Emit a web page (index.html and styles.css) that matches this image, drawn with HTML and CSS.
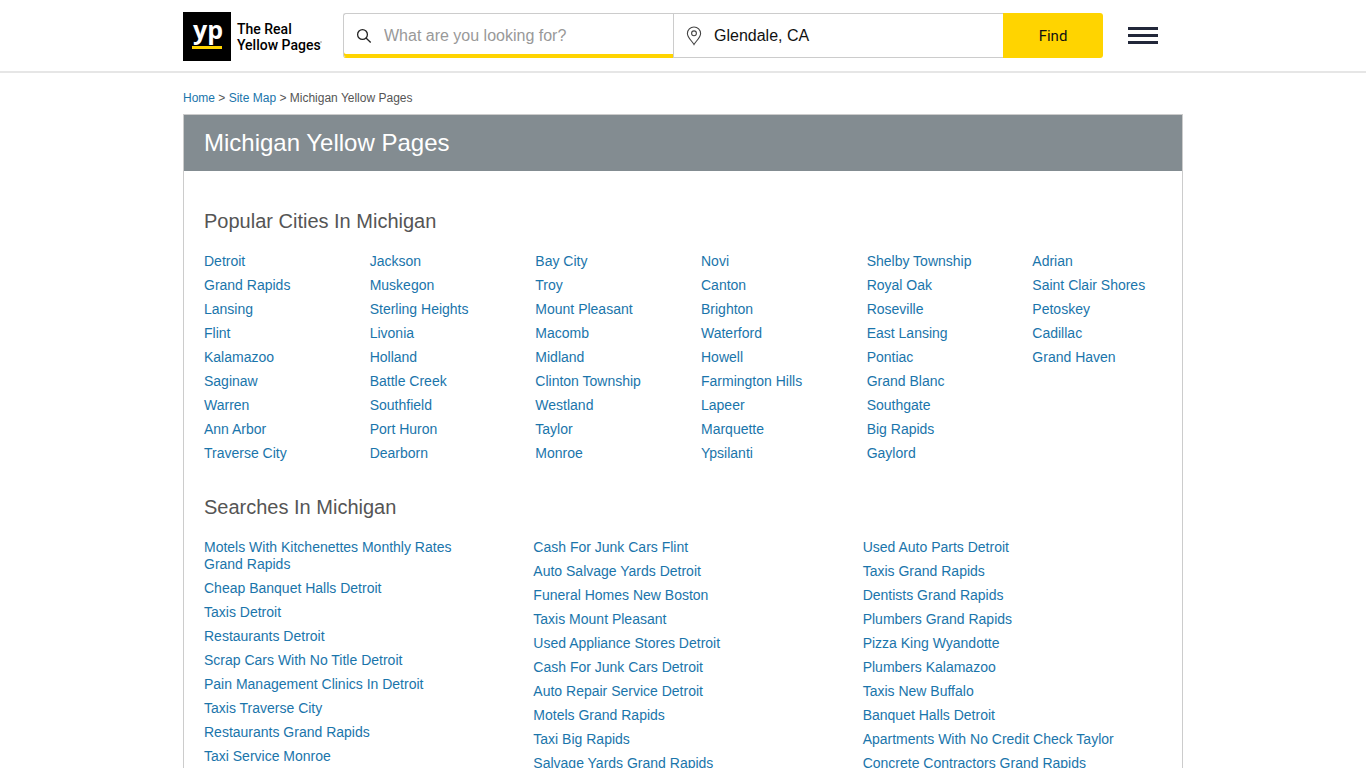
FILE: index.html
```html
<!DOCTYPE html>
<html lang="en">
<head>
    <meta charset="UTF-8">
    <meta name="viewport" content="width=device-width, initial-scale=1.0">
    <title>Michigan Yellow Pages</title>
    <link rel="stylesheet" href="styles.css">
</head>
<body>
    <header class="site-header">
        <div class="container header-row">
            <a class="logo" href="#" aria-label="The Real Yellow Pages">
                <svg width="140" height="49" viewBox="0 0 140 49">
                    <rect width="48" height="49" fill="#000"/>
                    <text class="logo-mark" x="10" y="27">yp</text>
                    <rect x="9" y="34" width="30" height="3" fill="#ffd400"/>
                    <text class="logo-name" x="54" y="22">The Real</text>
                    <text class="logo-name" x="54" y="38">Yellow Pages</text>
                    <circle cx="138" cy="30" r="0.8" fill="#888"/>
                </svg>
            </a>

            <form class="search-form">
                <div class="field field-what">
                    <svg width="16" height="16" viewBox="0 0 16 16" fill="none" stroke="#222" stroke-width="1.3">
                        <circle cx="6.5" cy="6.5" r="4.9"/>
                        <path d="M10 10l4.7 4.5"/>
                    </svg>
                    <input type="text" placeholder="What are you looking for?" aria-label="What are you looking for?">
                </div>
                <div class="field field-where">
                    <svg width="16" height="20" viewBox="0 0 16 20" fill="none" stroke="#444" stroke-width="1.1">
                        <path d="M8 18.5C6.2 15.2 1.4 11.6 1.4 7.4a6.6 6.4 0 0 1 13.2 0C14.6 11.6 9.8 15.2 8 18.5z"/>
                        <circle cx="8" cy="7.3" r="2.4"/>
                    </svg>
                    <input type="text" value="Glendale, CA" aria-label="Where">
                </div>
                <button class="find" type="submit">Find</button>
            </form>

            <button class="menu" type="button" aria-label="Menu">
                <span></span>
                <span></span>
                <span></span>
            </button>
        </div>
    </header>

    <main class="container">
        <nav class="breadcrumbs">
            <a href="#">Home</a> &gt; <a href="#">Site Map</a> &gt; Michigan Yellow Pages
        </nav>

        <div class="card">
            <h1>Michigan Yellow Pages</h1>

            <section>
                <h2>Popular Cities In Michigan</h2>
                <div class="columns cities">
                    <ul>
                        <li><a href="#">Detroit</a></li>
                        <li><a href="#">Grand Rapids</a></li>
                        <li><a href="#">Lansing</a></li>
                        <li><a href="#">Flint</a></li>
                        <li><a href="#">Kalamazoo</a></li>
                        <li><a href="#">Saginaw</a></li>
                        <li><a href="#">Warren</a></li>
                        <li><a href="#">Ann Arbor</a></li>
                        <li><a href="#">Traverse City</a></li>
                    </ul>
                    <ul>
                        <li><a href="#">Jackson</a></li>
                        <li><a href="#">Muskegon</a></li>
                        <li><a href="#">Sterling Heights</a></li>
                        <li><a href="#">Livonia</a></li>
                        <li><a href="#">Holland</a></li>
                        <li><a href="#">Battle Creek</a></li>
                        <li><a href="#">Southfield</a></li>
                        <li><a href="#">Port Huron</a></li>
                        <li><a href="#">Dearborn</a></li>
                    </ul>
                    <ul>
                        <li><a href="#">Bay City</a></li>
                        <li><a href="#">Troy</a></li>
                        <li><a href="#">Mount Pleasant</a></li>
                        <li><a href="#">Macomb</a></li>
                        <li><a href="#">Midland</a></li>
                        <li><a href="#">Clinton Township</a></li>
                        <li><a href="#">Westland</a></li>
                        <li><a href="#">Taylor</a></li>
                        <li><a href="#">Monroe</a></li>
                    </ul>
                    <ul>
                        <li><a href="#">Novi</a></li>
                        <li><a href="#">Canton</a></li>
                        <li><a href="#">Brighton</a></li>
                        <li><a href="#">Waterford</a></li>
                        <li><a href="#">Howell</a></li>
                        <li><a href="#">Farmington Hills</a></li>
                        <li><a href="#">Lapeer</a></li>
                        <li><a href="#">Marquette</a></li>
                        <li><a href="#">Ypsilanti</a></li>
                    </ul>
                    <ul>
                        <li><a href="#">Shelby Township</a></li>
                        <li><a href="#">Royal Oak</a></li>
                        <li><a href="#">Roseville</a></li>
                        <li><a href="#">East Lansing</a></li>
                        <li><a href="#">Pontiac</a></li>
                        <li><a href="#">Grand Blanc</a></li>
                        <li><a href="#">Southgate</a></li>
                        <li><a href="#">Big Rapids</a></li>
                        <li><a href="#">Gaylord</a></li>
                    </ul>
                    <ul>
                        <li><a href="#">Adrian</a></li>
                        <li><a href="#">Saint Clair Shores</a></li>
                        <li><a href="#">Petoskey</a></li>
                        <li><a href="#">Cadillac</a></li>
                        <li><a href="#">Grand Haven</a></li>
                    </ul>
                </div>
            </section>

            <section>
                <h2>Searches In Michigan</h2>
                <div class="columns searches">
                    <ul>
                        <li><a href="#">Motels With Kitchenettes Monthly Rates Grand Rapids</a></li>
                        <li><a href="#">Cheap Banquet Halls Detroit</a></li>
                        <li><a href="#">Taxis Detroit</a></li>
                        <li><a href="#">Restaurants Detroit</a></li>
                        <li><a href="#">Scrap Cars With No Title Detroit</a></li>
                        <li><a href="#">Pain Management Clinics In Detroit</a></li>
                        <li><a href="#">Taxis Traverse City</a></li>
                        <li><a href="#">Restaurants Grand Rapids</a></li>
                        <li><a href="#">Taxi Service Monroe</a></li>
                    </ul>
                    <ul>
                        <li><a href="#">Cash For Junk Cars Flint</a></li>
                        <li><a href="#">Auto Salvage Yards Detroit</a></li>
                        <li><a href="#">Funeral Homes New Boston</a></li>
                        <li><a href="#">Taxis Mount Pleasant</a></li>
                        <li><a href="#">Used Appliance Stores Detroit</a></li>
                        <li><a href="#">Cash For Junk Cars Detroit</a></li>
                        <li><a href="#">Auto Repair Service Detroit</a></li>
                        <li><a href="#">Motels Grand Rapids</a></li>
                        <li><a href="#">Taxi Big Rapids</a></li>
                        <li><a href="#">Salvage Yards Grand Rapids</a></li>
                    </ul>
                    <ul>
                        <li><a href="#">Used Auto Parts Detroit</a></li>
                        <li><a href="#">Taxis Grand Rapids</a></li>
                        <li><a href="#">Dentists Grand Rapids</a></li>
                        <li><a href="#">Plumbers Grand Rapids</a></li>
                        <li><a href="#">Pizza King Wyandotte</a></li>
                        <li><a href="#">Plumbers Kalamazoo</a></li>
                        <li><a href="#">Taxis New Buffalo</a></li>
                        <li><a href="#">Banquet Halls Detroit</a></li>
                        <li><a href="#">Apartments With No Credit Check Taylor</a></li>
                        <li><a href="#">Concrete Contractors Grand Rapids</a></li>
                    </ul>
                </div>
            </section>
        </div>
    </main>
</body>
</html>
```
FILE: styles.css
```css
* {
    box-sizing: border-box;
}

body {
    margin: 0;
    background-color: #fff;
    color: #555;
    font-family: Arial, "Liberation Sans", sans-serif;
    font-size: 14px;
    line-height: 17px;
}

a {
    color: #1a75ab;
    text-decoration: none;
}

a:hover {
    text-decoration: underline;
}

ul {
    list-style: none;
    margin: 0;
    padding: 0;
}

.container {
    max-width: 1000px;
    margin: 0 auto;
}

/* Header */
.site-header {
    padding: 12px 0 10px;
    border-bottom: 2px solid #e6e6e6;
}

.header-row {
    display: flex;
    align-items: flex-start;
}

.logo {
    width: 160px;
}

.logo svg {
    display: block;
}

.logo-mark {
    fill: #fff;
    font-family: "Open Sans", sans-serif;
    font-size: 25px;
    font-weight: 700;
}

.logo-name {
    fill: #000;
    font-family: Roboto, sans-serif;
    font-size: 14px;
    font-weight: 500;
}

.search-form {
    display: flex;
    flex: 1;
    height: 45px;
    margin-top: 1px;
}

.field {
    display: flex;
    flex: 1;
    align-items: center;
    gap: 12px;
    padding-left: 12px;
    border: 1px solid #ccc;
    border-right: 0;
}

.field svg {
    flex: none;
}

.field input {
    flex: 1;
    min-width: 0;
    padding: 0;
    border: 0;
    outline: 0;
    background: none;
    color: #111;
    font-family: inherit;
    font-size: 16px;
}

.field input::placeholder {
    color: #999;
}

/* Active field gets the yellow underline */
.field-what {
    border-bottom-color: #ffd400;
    border-radius: 3px 0 0 3px;
    box-shadow: inset 0 -3px #ffd400;
}

.find {
    width: 100px;
    border: 0;
    border-radius: 0 3px 3px 0;
    background-color: #ffd400;
    color: #111;
    font-family: Roboto, sans-serif;
    font-size: 15px;
    cursor: pointer;
}

.menu {
    display: flex;
    flex-direction: column;
    gap: 4px;
    width: 30px;
    margin: 15px 25px 0;
    padding: 0;
    border: 0;
    background: none;
    cursor: pointer;
}

.menu span {
    width: 100%;
    height: 3px;
    background-color: #22283a;
}

/* Content */
.breadcrumbs {
    padding: 17px 0 7px;
    font-size: 12px;
}

.card {
    padding-bottom: 20px;
    border: 1px solid #ccc;
}

h1 {
    margin: 0 0 36px;
    padding: 14px 20px;
    background-color: #838c91;
    color: #fff;
    font-size: 24px;
    font-weight: normal;
    line-height: 28px;
}

h2 {
    margin: 0 0 18px;
    font-size: 20px;
    font-weight: normal;
    line-height: 28px;
}

section {
    padding: 0 20px;
    margin-bottom: 24px;
}

.columns {
    display: grid;
}

.columns li {
    margin-bottom: 7px;
}

.cities {
    grid-template-columns: repeat(6, 1fr);
    column-gap: 36px;
}

.cities li {
    white-space: nowrap;
}

.searches {
    grid-template-columns: repeat(3, 1fr);
    column-gap: 30px;
}

.searches li {
    padding-right: 20px;
}
```
